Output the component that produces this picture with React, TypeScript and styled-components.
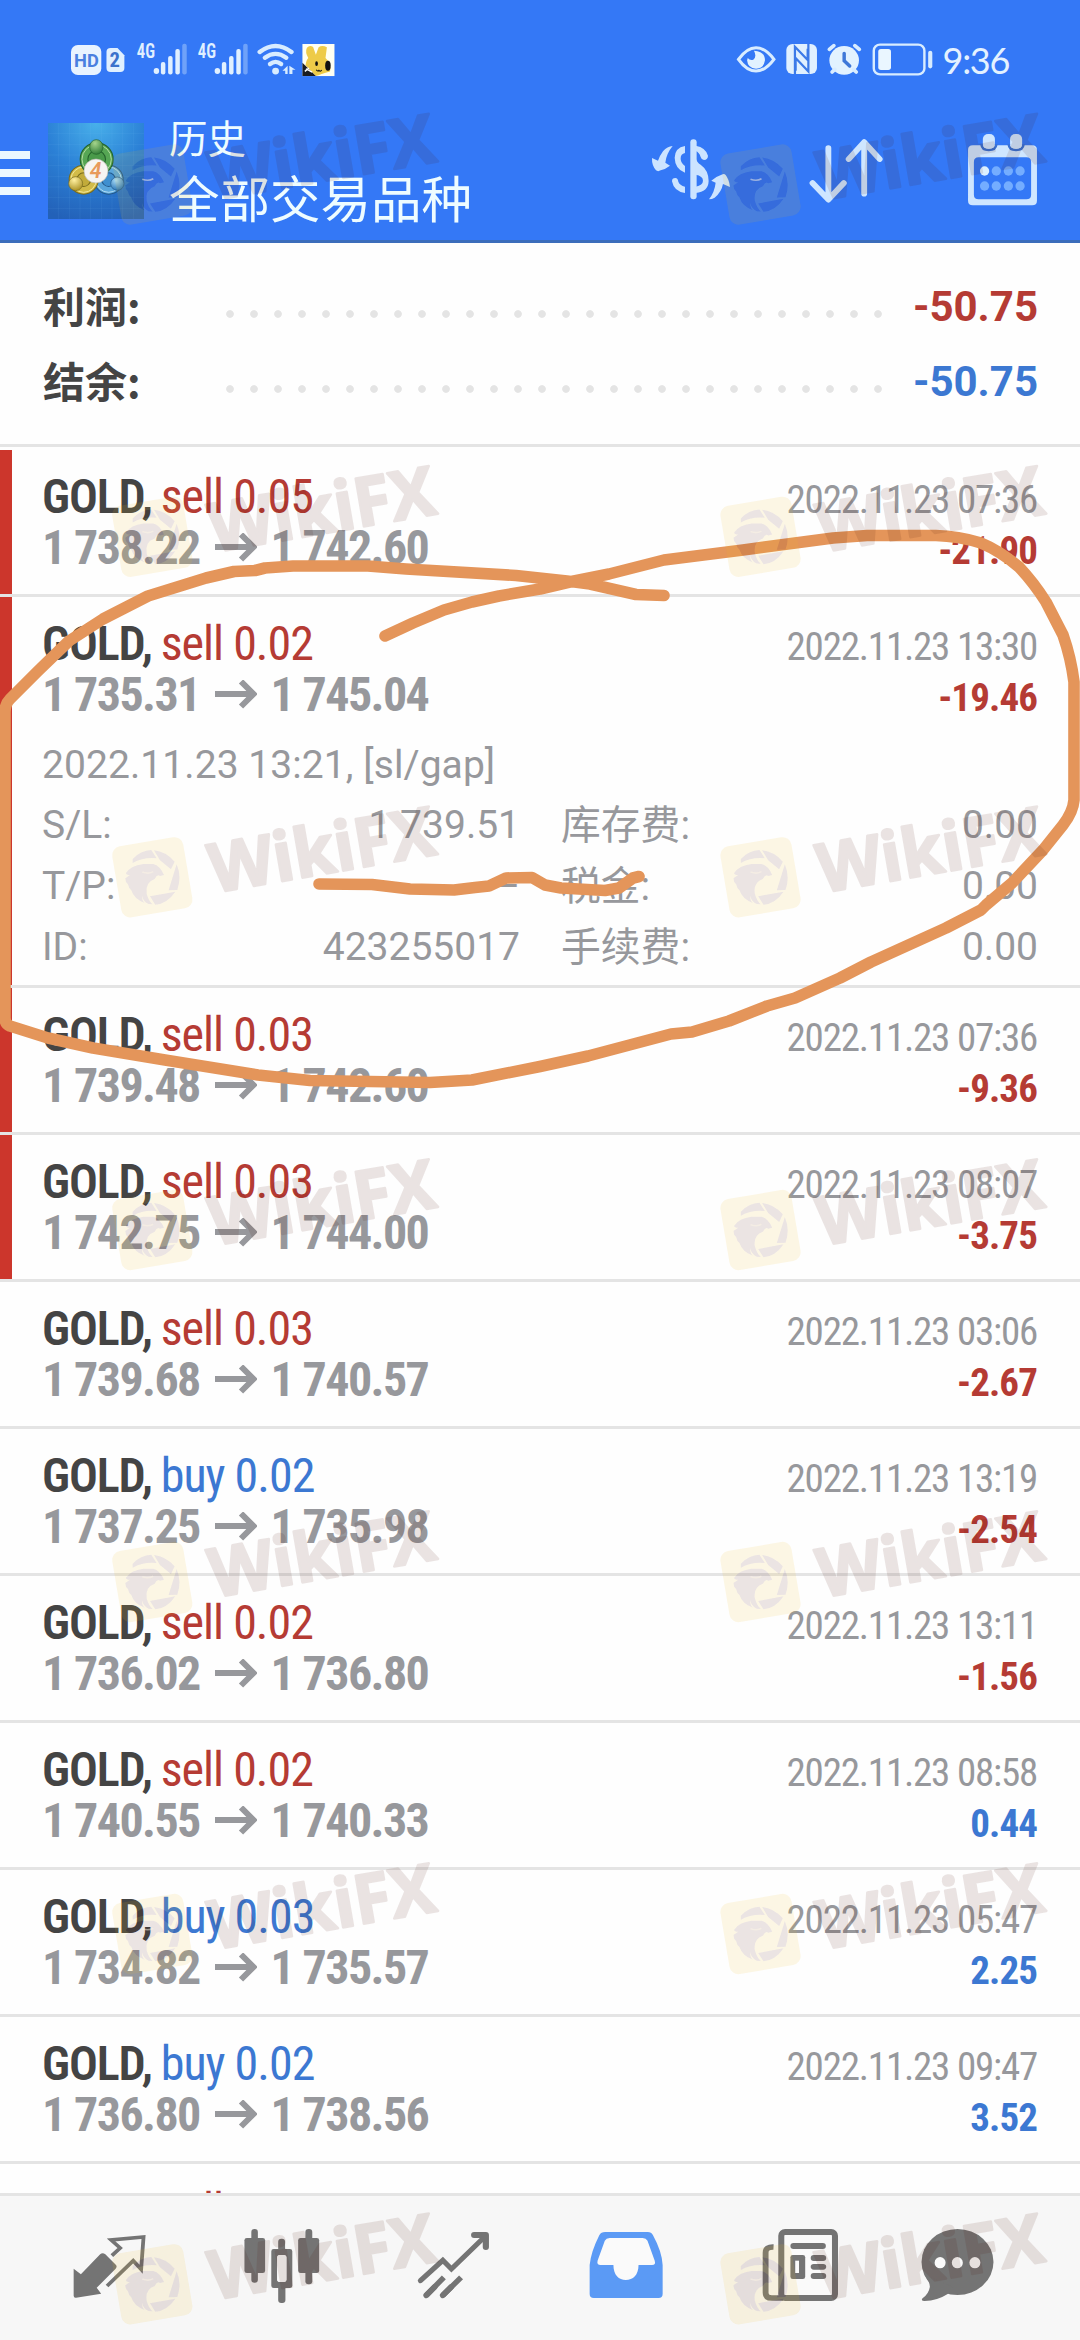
import React from 'react';
import styled, { createGlobalStyle } from 'styled-components';

const RED = '#b53b34';
const BLUE = '#3c78d2';
const GREY = '#97989c';
const RULE = '#e4e4e4';
const INK = '#444444';

const GlobalStyle = createGlobalStyle`
  * { box-sizing: border-box; }
  body { margin: 0; background: #fefefe; font-family: Roboto, 'Noto Sans CJK SC', sans-serif; }
`;

const Screen = styled.div`
  position: relative;
  width: 1080px;
  height: 2340px;
  overflow: hidden;
  display: flex;
  flex-direction: column;
  background: #fefefe;
`;

/* ---------- header ---------- */
const Header = styled.header`
  flex: none;
  height: 243px;
  background: #3478f6;
  border-bottom: 3px solid #3b6dbb;
`;
const StatusBar = styled.div`
  display: flex;
  align-items: flex-start;
  height: 83px;
  padding: 40px 71px 0 70.6px;
`;
const StatusIcons = styled.svg<{ $w: number }>`
  display: block;
  width: ${(p) => p.$w}px;
  height: 38.4px;
`;
const Spacer = styled.div`
  flex: 1;
`;
const Clock = styled.div`
  margin-left: 9px;
  font: 400 36px/40px Lato, sans-serif;
  letter-spacing: -1.3px;
  color: #e4f2ff;
`;
const AppBar = styled.div`
  display: flex;
  align-items: flex-start;
  height: 157px;
  padding: 32px 42px 0 0;
`;
const Burger = styled.div`
  display: flex;
  flex-direction: column;
  gap: 10px;
  width: 30px;
  padding-top: 36px;
`;
const BurgerLine = styled.i`
  height: 8px;
  background: #ecf8ff;
`;
const Logo = styled.svg`
  width: 96px;
  height: 96px;
  margin: 8px 25px 0 18px;
`;
const Titles = styled.div`
  display: flex;
  flex-direction: column;
  margin-top: -2px;
  color: #eefcff;
  font-family: 'Noto Sans CJK SC', sans-serif;
`;
const Caption = styled.span`
  font-size: 38.5px;
  line-height: 46px;
`;
const Title = styled.span`
  font-size: 50.5px;
  line-height: 60px;
  margin-top: 7px;
`;
const Action = styled.svg<{ $w: number; $h: number; $top: number; $left: number }>`
  width: ${(p) => p.$w}px;
  height: ${(p) => p.$h}px;
  margin: ${(p) => p.$top}px 0 0 ${(p) => p.$left}px;
`;

/* ---------- summary ---------- */
const Summary = styled.section`
  flex: none;
  height: 204px;
  padding: 27px 43px 0 43px;
  border-bottom: 3px solid ${RULE};
`;
const SummaryRow = styled.div`
  display: flex;
  height: 75px;
  line-height: 75px;
`;
const SummaryLabel = styled.span`
  width: 175px;
  font: 700 42px/70px 'Noto Sans CJK SC', sans-serif;
  color: ${INK};
`;
const Dots = styled.i`
  width: 672px;
  height: 8px;
  margin: 40px 0 0;
  background: radial-gradient(circle at 12px 4px, ${RULE} 3.4px, transparent 4.2px) 0 0 / 24px 8px repeat-x;
`;
const SummaryValue = styled.span<{ $color: string }>`
  flex: 1;
  text-align: right;
  font-size: 42px;
  font-weight: 700;
  color: ${(p) => p.$color};
  line-height: 73px;
  margin-right: -1px;
`;

/* ---------- deals ---------- */
const Deals = styled.main`
  flex: 1;
  min-height: 0;
  overflow: hidden;
  padding-top: 3px;
`;
const Deal = styled.article<{ $mark?: boolean; $open?: boolean }>`
  height: ${(p) => (p.$open ? 391 : 147)}px;
  padding: 21px 43px 0 42px;
  border-bottom: 3px solid ${RULE};
  ${(p) => p.$mark && 'background: linear-gradient(90deg, #cc362c 12px, transparent 12px);'}
`;
const Line = styled.div`
  display: flex;
  align-items: baseline;
  height: 51px;
  line-height: 51px;
  white-space: pre;
  font-family: 'Roboto Condensed', sans-serif;
`;
const Symbol = styled.b`
  font-size: 48px;
  font-weight: 600;
  letter-spacing: -1.2px;
  color: ${INK};
`;
const Side = styled.span<{ $color: string }>`
  font-size: 48px;
  letter-spacing: -1px;
  margin-left: 9px;
  color: ${(p) => p.$color};
`;
const DateText = styled.span`
  margin-left: auto;
  font-size: 39px;
  letter-spacing: -1.2px;
  color: ${GREY};
`;
const Price = styled.b`
  width: 158.5px;
  font-size: 48px;
  font-weight: 700;
  letter-spacing: -1.6px;
  color: ${GREY};
`;
const Arrow = styled.svg`
  width: 42px;
  height: 30px;
  margin: 0 14px;
  transform: translateY(-1px);
`;
const Profit = styled.b<{ $color: string }>`
  margin-left: auto;
  font-size: 39px;
  letter-spacing: -0.9px;
  color: ${(p) => p.$color};
`;
const Details = styled.div`
  display: grid;
  grid-template-columns: 200px 277px 42px 220px 1fr;
  grid-auto-rows: 60.7px;
  margin-top: 14.5px;
  font-size: 39px;
  line-height: 61px;
  color: ${GREY};
`;
const Comment = styled.span`
  grid-column: 1 / -1;
  letter-spacing: 0.07px;
`;
const Label = styled.span<{ $col: number }>`
  grid-column: ${(p) => p.$col};
`;
const CjkLabel = styled(Label)`
  font-size: 39.8px;
`;
const Value = styled.span<{ $col: number }>`
  grid-column: ${(p) => p.$col};
  text-align: right;
  margin-right: -1px;
`;

/* ---------- bottom navigation ---------- */
const Nav = styled.nav`
  flex: none;
  display: flex;
  height: 147px;
  padding: 29px 0 0 23.85px;
  border-top: 3px solid ${RULE};
  background: #f7f7f7;
`;
const NavItem = styled.div<{ $w: number }>`
  width: ${(p) => p.$w}px;
  display: flex;
  justify-content: center;
  align-items: flex-start;
`;
const NavIcon = styled.svg`
  width: 79.2px;
  height: 80px;
`;

/* ---------- overlays ---------- */
const Overlay = styled.svg`
  position: absolute;
  left: 0;
  top: 0;
  width: 1080px;
  height: 2340px;
  pointer-events: none;
`;
const MarkText = styled.text`
  font: 700 68px 'Open Sans', sans-serif;
  fill: rgb(72, 14, 0);
  stroke: rgb(72, 14, 0);
  stroke-width: 2.6px;
  stroke-linejoin: round;
  opacity: 0.104;
`;

const SIGNAL = [
  [466, 186],
  [487, 168],
  [508, 147],
];
const Signal = ({ x }: { x: number }) => (
  <g transform={`translate(${x} 0)`} fill="#e0f0ff">
    <text x="396" y="173" fontSize="60" fontFamily="Roboto Condensed" fontWeight="600" textLength="53" lengthAdjust="spacingAndGlyphs">4G</text>
    <ellipse cx="453" cy="213" rx="8" ry="9" />
    {SIGNAL.map(([bx, by]) => (
      <rect key={bx} x={bx} y={by} width="13" height={223 - by} rx="6" />
    ))}
    <rect x="528" y="131" width="13" height="92" rx="6" opacity=".35" />
  </g>
);

const StatusLeft = () => (
  <StatusIcons $w={265.2} viewBox="205 120 770 115" preserveAspectRatio="none">
    <rect x="205" y="135" width="88" height="90" rx="20" fill="#e8f3ff" />
    <text x="214" y="202" fontSize="57" fontFamily="Roboto" fontWeight="700" fill="#4a80e0" textLength="72" lengthAdjust="spacingAndGlyphs">HD</text>
    <path d="M320 144H340L360 166V204Q360 216 348 216H320Q308 216 308 204V156Q308 144 320 144Z" fill="#e0f0ff" />
    <text x="317" y="202" fontSize="60" fontFamily="Roboto Condensed" fontWeight="700" fill="#3a72cc">2</text>
    <Signal x={0} />
    <Signal x={177} />
    <g fill="none" stroke="#d8ecff" strokeWidth="13" strokeLinecap="round">
      <path d="M753 156Q799 120 845 156" />
      <path d="M768 173Q799 150 830 173" />
      <path d="M783 192Q799 179 815 192" />
    </g>
    <ellipse cx="799" cy="213" rx="10" ry="10" fill="#d8ecff" />
    <path d="M819 212L834 197V222H827V212ZM839 197L857 209H848V222H839Z" fill="#d8ecff" />
    <rect x="877" y="132" width="93" height="96" fill="#fffff2" />
    <path d="M890 143Q898 134 908 141L916 164L924 142Q934 134 948 142L944 174Q962 190 957 214Q930 222 916 228L886 196Q888 180 894 174Q884 156 890 143Z" fill="#eecb48" />
    <path d="M877 188L916 228H877Z" fill="#1a1c20" />
    <path d="M887 206L905 216M884 214L896 204" stroke="#fff" strokeWidth="4" />
    <ellipse cx="951" cy="197" rx="8" ry="15" fill="#111" />
    <ellipse cx="918" cy="191" rx="4" ry="7" fill="#111" />
    <path d="M917 209Q922 216 925 211Q929 216 933 210" fill="none" stroke="#111" strokeWidth="3" />
  </StatusIcons>
);

const StatusRight = () => (
  <StatusIcons $w={199.7} viewBox="560 120 580 115" preserveAspectRatio="none">
    <path d="M573 178Q597 143 624 143Q651 143 676 178Q651 213 624 213Q597 213 573 178Z" fill="none" stroke="#d8ecff" strokeWidth="9" />
    <path d="M618 152Q650 154 650 181Q647 205 624 206Q600 205 598 181L600 174Q607 183 616 179Q627 170 618 152Z" fill="#e2f2ff" />
    <rect x="712" y="132" width="89" height="90" rx="18" fill="#e0f0ff" />
    <path d="M737 222V140L774 180V146M776 132V214L739 174V212" fill="none" stroke="#3c7ae8" strokeWidth="6.5" />
    <ellipse cx="880" cy="181" rx="43" ry="43" fill="#e2f2ff" />
    <path d="M837 148L850 137M924 148L911 137M845 216L853 208M915 216L907 208" stroke="#d8ecff" strokeWidth="11" strokeLinecap="round" />
    <path d="M880 160V182L896 198" fill="none" stroke="#3f78d8" strokeWidth="10" strokeLinecap="round" />
    <rect x="966" y="134" width="147" height="89" rx="18" fill="none" stroke="#d8ecff" strokeWidth="7" />
    <rect x="979" y="147" width="37" height="63" rx="8" fill="#eaf6ff" />
    <rect x="1124" y="152" width="12" height="53" rx="6" fill="#d8ecff" />
  </StatusIcons>
);

const AppLogo = () => (
  <Logo viewBox="24 24 288 288">
    <defs>
      <radialGradient id="sky" cx=".5" cy="0" r="1.05">
        <stop offset="0" stopColor="#48b0ea" />
        <stop offset=".5" stopColor="#2b80d6" />
        <stop offset="1" stopColor="#2361b8" />
      </radialGradient>
      <radialGradient id="leaf" cx=".4" cy=".25" r=".8">
        <stop offset="0" stopColor="#a5d48c" />
        <stop offset="1" stopColor="#2c7a34" />
      </radialGradient>
      <radialGradient id="sand" cx=".4" cy=".25" r=".8">
        <stop offset="0" stopColor="#fff0a0" />
        <stop offset="1" stopColor="#a88e20" />
      </radialGradient>
      <radialGradient id="sea" cx=".4" cy=".25" r=".8">
        <stop offset="0" stopColor="#a8dcf8" />
        <stop offset="1" stopColor="#2470b4" />
      </radialGradient>
    </defs>
    <rect x="24" y="24" width="288" height="288" fill="url(#sky)" />
    <path d="M56 24V312M88 24V312M120 24V312M152 24V312M184 24V312M216 24V312M248 24V312M280 24V312M24 56H312M24 88H312M24 120H312M24 152H312M24 184H312M24 216H312M24 248H312M24 280H312" stroke="#8cc8ff" strokeOpacity=".12" strokeWidth="2" />
    <g fill="none">
      <circle cx="206" cy="194" r="32" fill="#3f8fd0" />
      <circle cx="206" cy="194" r="32" stroke="#22588a" strokeWidth="26" />
      <circle cx="206" cy="194" r="32" stroke="#5aa6dc" strokeWidth="20" />
      <circle cx="206" cy="194" r="38" stroke="#b0dcf4" strokeWidth="3" />
      <circle cx="131" cy="194" r="32" fill="#c2ab3a" />
      <circle cx="131" cy="194" r="32" stroke="#776a1c" strokeWidth="26" />
      <circle cx="131" cy="194" r="32" stroke="#d2bb48" strokeWidth="20" />
      <circle cx="131" cy="194" r="38" stroke="#f2e89a" strokeWidth="3" />
      <circle cx="170" cy="133" r="38" fill="#4a9a4a" />
      <circle cx="170" cy="133" r="38" stroke="#22602a" strokeWidth="26" />
      <circle cx="170" cy="133" r="38" stroke="#56a654" strokeWidth="20" />
      <circle cx="170" cy="133" r="44" stroke="#b4dca0" strokeWidth="3" />
    </g>
    <ellipse cx="169" cy="96" rx="20" ry="22" fill="url(#leaf)" stroke="#22602a" strokeWidth="2" />
    <circle cx="107" cy="206" r="21" fill="url(#sand)" stroke="#776a1c" strokeWidth="2" />
    <circle cx="232" cy="206" r="20" fill="url(#sea)" stroke="#22588a" strokeWidth="2" />
    <circle cx="168" cy="168" r="36" fill="#f6f4f2" stroke="#b8b8b0" strokeWidth="2" />
    <text x="167" y="190" textAnchor="middle" fontSize="64" fontWeight="600" fontStyle="italic" fontFamily="Roboto" fill="#e89a5c">4</text>
  </Logo>
);

const ExchangeIcon = () => (
  <Action $w={83.3} $h={65} $top={21.7} $left={0} viewBox="25 50 250 195" fill="#cce4ff">
    <path d="M96 77Q80 78 67 93Q58 105 52 121L34 113Q33 135 46 150Q52 155 60 150Q75 146 88 136L74 127Q77 100 96 77Z" />
    <path d="M246 162Q251 160 255 164Q266 178 268 200L247 191Q243 215 222 232Q214 237 205 237Q222 215 225 187L212 181Q228 168 246 162Z" />
    <rect x="149" y="57" width="19" height="180" rx="9" />
    <path d="M133 77Q103 82 102 112Q103 146 133 157V137Q119 128 120 114Q120 101 133 98Z" />
    <path d="M94 183Q94 173 104 173Q112 174 113 184Q117 195 133 199V218Q100 214 94 183Z" />
    <path d="M165 76Q196 82 202 106Q202 118 190 119Q182 118 180 110Q176 96 165 92Z" />
    <path d="M165 112Q168 126 180 133Q204 150 204 182Q203 215 165 218V199Q187 195 187 181Q187 167 165 163Z" />
  </Action>
);

const SortIcon = () => (
  <Action $w={77.5} $h={66.7} $top={21.7} $left={75} viewBox="775 410 225 200" preserveAspectRatio="none" fill="none" stroke="#cfe6ff" strokeWidth="17" strokeLinecap="round" strokeLinejoin="round">
    <path d="M837 443V596M791 548L837 598L882 548" />
    <path d="M941 580V426M896 476L941 425L986 476" />
  </Action>
);

const CalendarIcon = () => (
  <Action $w={71} $h={73.3} $top={17.7} $left={82.6} viewBox="1240 398 206 220" preserveAspectRatio="none" fill="#cfe6ff">
    <path fillRule="evenodd" d="M1257 435H1429Q1443 435 1443 449V601Q1443 615 1429 615H1257Q1243 615 1243 601V449Q1243 435 1257 435ZM1274 471Q1260 471 1260 485V583Q1260 597 1274 597H1412Q1426 597 1426 583V485Q1426 471 1412 471Z" />
    <g stroke="#3a72d4" strokeWidth="7">
      <path d="M1282 435V432Q1283 449 1303 449Q1324 449 1325 432V435M1361 435V432Q1362 449 1382 449Q1403 449 1404 432V435" fill="none" />
    </g>
    <rect x="1286" y="401" width="35" height="44" rx="15" />
    <rect x="1365" y="401" width="35" height="44" rx="15" />
    {[512, 557].map((cy) =>
      [1291, 1325, 1360, 1394].map((cx) => (
        <ellipse key={`${cx}-${cy}`} cx={cx} cy={cy} rx="13.5" ry="14" fill={cx === 1291 && cy === 512 ? '#dcf0ff' : '#74adff'} />
      )),
    )}
  </Action>
);

type DealData = { side: 'sell' | 'buy'; vol: string; open: string; close: string; date: string; profit: string; mark?: boolean; details?: boolean };
const DEALS: DealData[] = [
  { side: 'sell', vol: '0.05', open: '1 738.22', close: '1 742.60', date: '2022.11.23 07:36', profit: '-21.90', mark: true },
  { side: 'sell', vol: '0.02', open: '1 735.31', close: '1 745.04', date: '2022.11.23 13:30', profit: '-19.46', mark: true, details: true },
  { side: 'sell', vol: '0.03', open: '1 739.48', close: '1 742.60', date: '2022.11.23 07:36', profit: '-9.36', mark: true },
  { side: 'sell', vol: '0.03', open: '1 742.75', close: '1 744.00', date: '2022.11.23 08:07', profit: '-3.75', mark: true },
  { side: 'sell', vol: '0.03', open: '1 739.68', close: '1 740.57', date: '2022.11.23 03:06', profit: '-2.67' },
  { side: 'buy', vol: '0.02', open: '1 737.25', close: '1 735.98', date: '2022.11.23 13:19', profit: '-2.54' },
  { side: 'sell', vol: '0.02', open: '1 736.02', close: '1 736.80', date: '2022.11.23 13:11', profit: '-1.56' },
  { side: 'sell', vol: '0.02', open: '1 740.55', close: '1 740.33', date: '2022.11.23 08:58', profit: '0.44' },
  { side: 'buy', vol: '0.03', open: '1 734.82', close: '1 735.57', date: '2022.11.23 05:47', profit: '2.25' },
  { side: 'buy', vol: '0.02', open: '1 736.80', close: '1 738.56', date: '2022.11.23 09:47', profit: '3.52' },
];

const DealRow = ({ d }: { d: DealData }) => (
  <Deal $mark={d.mark} $open={d.details}>
    <Line>
      <Symbol>GOLD,</Symbol>
      <Side $color={d.side === 'sell' ? RED : BLUE}>{`${d.side} ${d.vol}`}</Side>
      <DateText>{d.date}</DateText>
    </Line>
    <Line>
      <Price>{d.open}</Price>
      <Arrow viewBox="0 0 42 30" fill="none" stroke={GREY} strokeWidth="6">
        <path d="M0 14H38M26 1.5L38.5 14L26 26.5" />
      </Arrow>
      <Price>{d.close}</Price>
      <Profit $color={d.profit.startsWith('-') ? RED : BLUE}>{d.profit}</Profit>
    </Line>
    {d.details && (
      <Details>
        <Comment>2022.11.23 13:21, [sl/gap]</Comment>
        <Label $col={1}>S/L:</Label>
        <Value $col={2}>1 739.51</Value>
        <CjkLabel $col={4}>库存费:</CjkLabel>
        <Value $col={5}>0.00</Value>
        <Label $col={1}>T/P:</Label>
        <Value $col={2}>–</Value>
        <CjkLabel $col={4}>税金:</CjkLabel>
        <Value $col={5}>0.00</Value>
        <Label $col={1}>ID:</Label>
        <Value $col={2}>423255017</Value>
        <CjkLabel $col={4}>手续费:</CjkLabel>
        <Value $col={5}>0.00</Value>
      </Details>
    )}
  </Deal>
);

const NavBar = () => (
  <Nav>
    <NavItem $w={172.3}>
      <NavIcon viewBox="204.4 255 230 240" preserveAspectRatio="none" fill="#747474">
        <path d="M215 386L236 403L292 343Q299 336 307 343L338 375Q342 380 337 386L282 443L295 461L222 473Q215 474 215 467Z" />
        <path d="M326 347L350 324L324 300L418 291L411 388L388 362L312 438" fill="none" stroke="#747474" strokeWidth="11" />
      </NavIcon>
    </NavItem>
    <NavItem $w={172.3}>
      <NavIcon viewBox="704.8 255 230 240" preserveAspectRatio="none" fill="#747474">
        <rect x="729" y="267" width="19" height="161" rx="9" />
        <rect x="709" y="294" width="60" height="105" rx="7" />
        <rect x="886" y="267" width="20" height="166" rx="9" />
        <rect x="865" y="294" width="61" height="105" rx="7" />
        <rect x="807" y="296" width="20" height="50" rx="9" />
        <rect x="807" y="430" width="21" height="59" rx="9" />
        <path fillRule="evenodd" d="M794 327H841Q848 327 848 334V437Q848 444 841 444H794Q787 444 787 437V334Q787 327 794 327ZM811 345Q804 345 804 353V418Q804 426 811 426H824Q831 426 831 418V353Q831 345 824 345Z" />
        <rect x="804" y="345" width="27" height="81" rx="8" fill="#f9f9f9" />
      </NavIcon>
    </NavItem>
    <NavItem $w={172.3}>
      <NavIcon viewBox="1205.2 255 230 240" preserveAspectRatio="none" fill="none" stroke="#747474" strokeWidth="15">
        <path d="M1221 422L1286 361L1311 387L1410 288" strokeLinecap="round" />
        <path d="M1377 285H1411V321" strokeWidth="18" strokeLinecap="round" strokeLinejoin="round" />
        <path d="M1238 466L1262 441M1286 466L1310 441" strokeWidth="17" strokeLinecap="round" />
        <path d="M1238 466L1289 412M1286 466L1339 412" strokeWidth="16" />
      </NavIcon>
    </NavItem>
    <NavItem $w={172.3}>
      <NavIcon viewBox="137.3 255 230 240" preserveAspectRatio="none">
        <path d="M190 276H314Q324 276 329 286Q355 335 357 375V462Q357 474 345 474H157Q145 474 145 462V375Q149 335 173 286Q178 276 190 276Z" fill="#5b9af5" />
        <path d="M203 294Q193 294 189 302L168 362Q165 375 177 375H214C214 405 230 420 250 420C271 420 287 405 287 375H326Q338 375 334 362L313 302Q309 294 299 294Z" fill="#fafafa" />
      </NavIcon>
    </NavItem>
    <NavItem $w={172.3}>
      <NavIcon viewBox="637.7 255 230 240" preserveAspectRatio="none" fill="#747474">
        <path d="M677 321Q654 320 654 338V458Q654 474 672 474H705" fill="none" stroke="#747474" strokeWidth="17" />
        <rect x="699.5" y="276" width="156" height="198" rx="11" fill="#fafafa" stroke="#747474" strokeWidth="17.5" />
        <rect x="726" y="309" width="103" height="18" rx="9" />
        <rect x="726" y="345" width="43" height="72" rx="7" />
        <rect x="740" y="362" width="11" height="37" fill="#fafafa" />
        <rect x="785" y="345" width="45" height="18" rx="9" />
        <rect x="785" y="372" width="45" height="17" rx="9" />
        <rect x="785" y="399" width="45" height="18" rx="9" />
      </NavIcon>
    </NavItem>
    <NavItem $w={149.4}>
      <NavIcon viewBox="1104.6 255 230 240" preserveAspectRatio="none" fill="#747474">
        <ellipse cx="1213.5" cy="366" rx="104.5" ry="99" />
        <path d="M1118 405Q1135 430 1133 442Q1130 462 1112 475Q1106 483 1118 483Q1155 482 1185 462L1200 440Z" />
        {[1163, 1213, 1264].map((cx) => (
          <ellipse key={cx} cx={cx} cy="368" rx="16" ry="17" fill="#fafafa" />
        ))}
      </NavIcon>
    </NavItem>
  </Nav>
);

const INKED =
  'M385 636L413 623L444 610L472 602L499 596L540 589L574 581L609 574L664 560L743 550L833 538L867 535.5L936 535.5Q958 536 981 543Q1000 551 1019 567Q1034 583 1046 602L1063 635Q1071 658 1074 682V800Q1073 812 1063 825L1043 850L1012 883L986 905L981 910L946 928L871 962L840 978L795 998L767 1006L729 1021L692 1032L671 1034L588 1056L540 1066.5L472 1080L430 1082.5L310 1080.5L258 1075L165 1060L93 1048L48 1038L10 1026Q5 1024 5 1018V712Q5 704 10 699L38 671L69 641L103 619L148 596L206 578L234 571.5L255 570.5L265 568L293 566H368L406 569L516 575.5L567 581L590 584L636 594.5L664 595.5';
const UNDERLINE =
  'M319 884L372 884.5L410 889L454 890L475 887.5L489 886L506 878L532 877.5L545 885L561 888L605 890.5L619 888L633 878L639 876.5';

const EAGLE = 'M100 207H130Q150 212 162 240L150 243Q142 236 134 252Q105 262 110 296Q116 318 128 328L116 327Q100 320 96 302Q96 318 104 324Q72 312 64 286Q56 280 54 268Q46 262 46 250L60 240Q48 240 48 234Q62 212 100 207Z';
const SHUTTER = 'M68 192Q92 166 124 165L140 190Q100 186 68 204ZM132 166Q168 170 194 200L183 223L150 196ZM200 208Q216 246 202 285L176 286ZM196 290Q172 326 136 329L120 304Z';

const MARK_X = [0, 608.2];
const MARK_Y = [184.5, 536.8, 877.3, 1230, 1582, 1934, 2284.3];

const Watermarks = () => (
  <>
    <defs>
      <mask id="bird" maskUnits="userSpaceOnUse" x="-60" y="-60" width="120" height="120">
        <rect x="-60" y="-60" width="120" height="120" fill="#fff" />
        <path transform="scale(.3333) translate(-127 -247)" d={EAGLE + SHUTTER} fill="#000" />
      </mask>
      <g id="mark">
        <g mask="url(#bird)">
          <rect x="-36" y="-36" width="72" height="72" rx="9" transform="rotate(-9.6)" fill="rgba(238,183,30,.118)" />
        </g>
        <path transform="scale(.3333) translate(-127 -247)" d={EAGLE + SHUTTER} fill="rgba(72,14,0,.104)" />
        <path transform="scale(.3333) translate(-127 -247)" d="M97 231Q115 238 130 230" fill="none" stroke="#fdf6e5" strokeOpacity=".5" strokeWidth="5" />
        <MarkText transform="translate(71 14) rotate(-9.8)" x="-10" y="0" textLength="228" lengthAdjust="spacingAndGlyphs">WikiFX</MarkText>
      </g>
    </defs>
    {MARK_Y.map((y) => MARK_X.map((x) => <use key={`${x}-${y}`} href="#mark" x={x + 152.3} y={y} />))}
  </>
);

export default function App() {
  return (
    <Screen>
      <GlobalStyle />
      <Header>
        <StatusBar>
          <StatusLeft />
          <Spacer />
          <StatusRight />
          <Clock>9:36</Clock>
        </StatusBar>
        <AppBar>
          <Burger>
            <BurgerLine />
            <BurgerLine />
            <BurgerLine />
          </Burger>
          <AppLogo />
          <Titles>
            <Caption>历史</Caption>
            <Title>全部交易品种</Title>
          </Titles>
          <Spacer />
          <ExchangeIcon />
          <SortIcon />
          <CalendarIcon />
        </AppBar>
      </Header>
      <Summary>
        <SummaryRow>
          <SummaryLabel>利润:</SummaryLabel>
          <Dots />
          <SummaryValue $color={RED}>-50.75</SummaryValue>
        </SummaryRow>
        <SummaryRow>
          <SummaryLabel>结余:</SummaryLabel>
          <Dots />
          <SummaryValue $color={BLUE}>-50.75</SummaryValue>
        </SummaryRow>
      </Summary>
      <Deals>
        {DEALS.map((d, i) => (
          <DealRow key={i} d={d} />
        ))}
        <Deal>
          <Line>
            <Symbol>GOLD,</Symbol>
            <Side $color={RED}>sell 0.03</Side>
          </Line>
        </Deal>
      </Deals>
      <NavBar />
      <Overlay viewBox="0 0 1080 2340">
        <g fill="none" stroke="#e4955a" strokeWidth="11.6" strokeLinecap="round" strokeLinejoin="round">
          <path d={INKED} />
          <path d={UNDERLINE} />
        </g>
        <Watermarks />
      </Overlay>
    </Screen>
  );
}
